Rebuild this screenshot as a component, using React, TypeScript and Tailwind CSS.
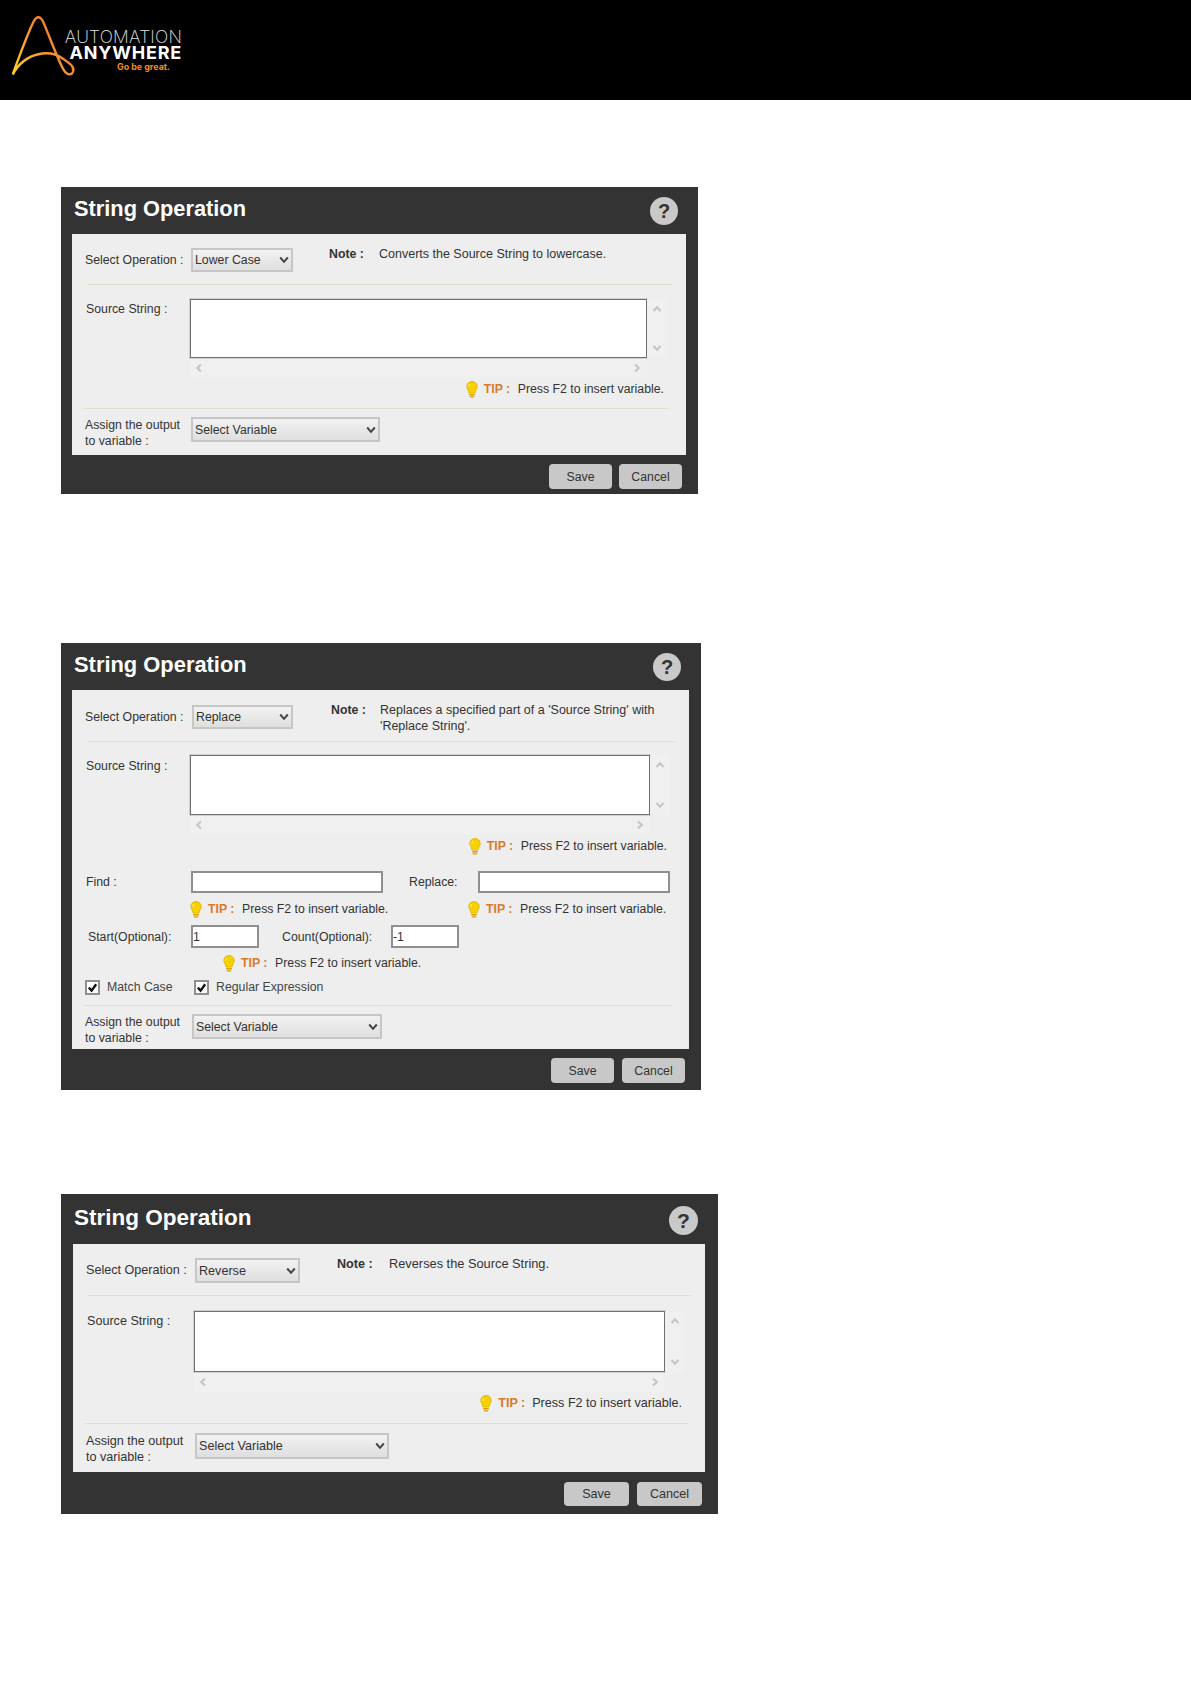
import { ReactNode } from "react";

const FONT = "font-['Liberation_Sans',Arial,sans-serif]";

function Chevron({ dir, className = "" }: { dir: "up" | "down" | "left" | "right"; className?: string }) {
  const d = {
    up: "M1.5 7 5 3.2 8.5 7",
    down: "M1.5 3 5 6.8 8.5 3",
    left: "M7 1.5 3.2 5 7 8.5",
    right: "M3 1.5 6.8 5 3 8.5",
  }[dir];
  return (
    <svg viewBox="0 0 10 10" className={`w-[10px] h-[10px] shrink-0 ${className}`} fill="none" stroke="#c4c4c4" strokeWidth="2">
      <path d={d} />
    </svg>
  );
}

function Bulb() {
  return (
    <svg viewBox="0 0 12 17" className="w-[12px] h-[17px] shrink-0">
      <path d="M6 .6C2.8.6.8 2.9.8 5.6c0 2.4 1.9 3.4 2.2 6.4h6c.3-3 2.2-4 2.2-6.4C11.2 2.9 9.2.6 6 .6Z" fill="#f7d000" stroke="#e0b400" strokeWidth=".9" />
      <path d="M4 3.2C3 4 2.7 5 2.9 6" fill="none" stroke="#fff3a0" strokeWidth="1" />
      <path d="M3.2 13h5.6v1.6H3.2zM3.8 15.2h4.4v1.4H3.8z" fill="#d6a000" />
    </svg>
  );
}

function Tip({ className = "" }: { className?: string }) {
  return (
    <div className={`flex items-center h-[20px] ${className}`}>
      <Bulb />
      <span className="ml-[6px] w-[34px] font-bold text-[#d97a2b]">TIP :</span>
      <span className="text-[#333]">Press F2 to insert variable.</span>
    </div>
  );
}

function Dropdown({ value, className }: { value: string; className: string }) {
  return (
    <div className={`relative shrink-0 ${className}`}>
      <select
        defaultValue={value}
        className="appearance-none w-full h-full pl-[2px] text-[#333] border-2 border-[#c6c6c6] bg-gradient-to-b from-[#f2f2f2] to-[#dfdfdf] rounded-none outline-none"
      >
        <option>{value}</option>
      </select>
      <svg viewBox="0 0 10 8" className="absolute right-[4px] top-1/2 -translate-y-1/2 w-[10px] h-[8px] pointer-events-none" fill="none" stroke="#444" strokeWidth="2">
        <path d="M1.2 1.5 5 5.8 8.8 1.5" />
      </svg>
    </div>
  );
}

function TextBox({ value, className }: { value?: string; className: string }) {
  return (
    <input
      readOnly
      value={value ?? ""}
      className={`shrink-0 bg-white border-2 border-[#8f8f8f] px-0 text-[#333] outline-none ${className}`}
    />
  );
}

function Check({ label, className = "" }: { label: string; className?: string }) {
  return (
    <div className={`flex items-center ${className}`}>
      <span className="flex items-center justify-center w-[15px] h-[15px] bg-white border-2 border-[#8f8f8f] shrink-0">
        <svg viewBox="0 0 12 12" className="w-[11px] h-[11px] shrink-0" fill="none" stroke="#111" strokeWidth="2.6">
          <path d="M2 6.2 5 9.4 10 2.4" />
        </svg>
      </span>
      <span className="ml-[7px] text-[#444]">{label}</span>
    </div>
  );
}

function Source({
  rowClass,
  labelClass,
  boxClass,
  hbarClass,
}: {
  rowClass: string;
  labelClass: string;
  boxClass: string;
  hbarClass: string;
}) {
  return (
    <div className={`flex items-start ${rowClass}`}>
      <div className={`shrink-0 text-[#333] ${labelClass}`}>Source String :</div>
      <div>
        <div className="flex">
          <textarea
            readOnly
            className={`block resize-none bg-white border border-[#707070] shadow-[0_0_0_1px_rgba(120,120,120,0.25)] outline-none ${boxClass}`}
          />
          <div className="w-[20px] flex flex-col items-center justify-between py-[5px] bg-[#f0f0f0]">
            <Chevron dir="up" />
            <Chevron dir="down" />
          </div>
        </div>
        <div className={`flex items-center justify-between h-[20px] pl-[4px] pr-[5px] bg-[#f0f0f0] ${hbarClass}`}>
          <Chevron dir="left" />
          <Chevron dir="right" />
        </div>
      </div>
    </div>
  );
}

function Dialog({
  className,
  headClass,
  titleClass,
  helpClass,
  panelClass,
  footClass,
  saveClass,
  cancelClass,
  children,
}: {
  className: string;
  headClass: string;
  titleClass: string;
  helpClass: string;
  panelClass: string;
  footClass: string;
  saveClass: string;
  cancelClass: string;
  children: ReactNode;
}) {
  return (
    <section className={`bg-[#333333] ml-[61px] ${className}`}>
      <header className={`flex items-center justify-between pl-[13px] pr-[20px] ${headClass}`}>
        <h2 className={`font-bold text-white leading-none -mt-[4px] ${titleClass}`}>String Operation</h2>
        <span className={`flex items-center justify-center rounded-full bg-[#c9c9c9] text-[#333] font-bold mt-[1px] ${helpClass}`}>?</span>
      </header>
      <div className={`bg-[#eeeeee] ${panelClass}`}>{children}</div>
      <footer className={`flex justify-end pr-[16px] ${footClass}`}>
        <button className={`bg-[#c8c8c8] rounded-[4px] text-[#333] ${saveClass}`}>Save</button>
        <button className={`bg-[#c8c8c8] rounded-[4px] text-[#333] ${cancelClass}`}>Cancel</button>
      </footer>
    </section>
  );
}

function Logo() {
  return (
    <div className="flex items-start h-[100px] bg-black">
      <svg viewBox="0 0 70 70" className="ml-[7px] mt-[14px] w-[70px] h-[64px] shrink-0" fill="none" strokeWidth="2.6" strokeLinecap="round">
        <defs>
          <linearGradient id="aa" x1="0" y1="1" x2="1" y2="0.2">
            <stop offset="0" stopColor="#ffd21f" />
            <stop offset="0.5" stopColor="#fa9a2c" />
            <stop offset="1" stopColor="#f2662b" />
          </linearGradient>
        </defs>
        <path
          d="M3 66 C 11 44 20 20 26 8 C 29 2 33 2 36 8 C 43 24 50 44 57 58 C 61 67 67 68 69 63 C 71 57 64 53 58 49 C 50 43 40 42 31 44 C 18 47 9 55 3 66 Z"
          stroke="url(#aa)"
        />
      </svg>
      <div className="ml-[-13px] mt-[29px] w-[118px] flex flex-col items-end font-['Inter',sans-serif]">
        <div className="text-[17.5px] leading-[15px] font-extralight text-[#e2e2e2] tracking-[0.2px] whitespace-nowrap">AUTOMATION</div>
        <div className="text-[18px] leading-[17px] font-bold text-white tracking-[0.8px] whitespace-nowrap">ANYWHERE</div>
        <div className="text-[8.9px] leading-[11px] mr-[12px] font-bold text-[#f08a24] whitespace-nowrap">Go be great.</div>
      </div>
    </div>
  );
}

export default function App() {
  return (
    <div className={`min-h-[1684px] bg-white leading-[16px] ${FONT}`}>
      <Logo />

      <Dialog
        className="mt-[87px] w-[637px] text-[12.3px]"
        headClass="h-[47px]"
        titleClass="text-[21.8px]"
        helpClass="w-[28px] h-[28px] text-[20px]"
        panelClass="ml-[11px] mr-[12px] h-[221px]"
        footClass="pt-[9px] h-[39px] gap-[7px]"
        saveClass="w-[63px] h-[25px]"
        cancelClass="w-[63px] h-[25px]"
      >
        <div className="flex h-[50px] pl-[13px] pt-[14px]">
          <div className="w-[106px] h-[23px] flex items-center text-[#333]">Select Operation :</div>
          <Dropdown value="Lower Case" className="w-[102px] h-[24px]" />
          <div className="ml-[36px] -mt-[2px] w-[50px] font-bold text-[#333]">Note :</div>
          <div className="-mt-[2px] text-[12.5px] text-[#333]">Converts the Source String to lowercase.</div>
        </div>
        <hr className="ml-[15px] w-[585px] border-[#e0e0cc]" />
        <Source rowClass="pl-[14px] pt-[14px]" labelClass="w-[104px] pt-[2px]" boxClass="w-[457px] h-[59px]" hbarClass="w-[457px]" />
        <div className="flex justify-end pr-[22px] pt-[1px] h-[20px]">
          <Tip />
        </div>
        <hr className="mt-[10px] ml-[11px] w-[586px] border-[#e0e0cc]" />
        <div className="flex pl-[13px] pt-[8px]">
          <div className="w-[106px] text-[#333]">
            Assign the output
            <br />
            to variable :
          </div>
          <Dropdown value="Select Variable" className="w-[189px] h-[25px]" />
        </div>
      </Dialog>

      <Dialog
        className="mt-[149px] w-[640px] text-[12.3px]"
        headClass="h-[47px]"
        titleClass="text-[21.9px]"
        helpClass="w-[28px] h-[28px] text-[20px]"
        panelClass="ml-[11px] mr-[12px] h-[359px]"
        footClass="pt-[9px] h-[41px] gap-[8px]"
        saveClass="w-[63px] h-[25px]"
        cancelClass="w-[63px] h-[25px]"
      >
        <div className="flex h-[51px] pl-[13px] pt-[15px]">
          <div className="w-[107px] h-[23px] flex items-center text-[#333]">Select Operation :</div>
          <Dropdown value="Replace" className="w-[101px] h-[24px]" />
          <div className="ml-[38px] -mt-[3px] w-[49px] font-bold text-[#333]">Note :</div>
          <div className="-mt-[3px] w-[290px] text-[12.5px] text-[#333]">Replaces a specified part of a 'Source String' with 'Replace String'.</div>
        </div>
        <hr className="ml-[15px] w-[588px] border-[#e0e0cc]" />
        <Source rowClass="pl-[14px] pt-[13px]" labelClass="w-[104px] pt-[3px]" boxClass="w-[460px] h-[60px]" hbarClass="w-[460px]" />
        <div className="flex justify-end pr-[22px] mt-[1px]">
          <Tip />
        </div>
        <div className="flex items-center pl-[14px] mt-[15px]">
          <div className="w-[105px] text-[#333]">Find :</div>
          <TextBox className="w-[192px] h-[22px]" />
          <div className="ml-[26px] w-[69px] text-[#333]">Replace:</div>
          <TextBox className="w-[192px] h-[22px]" />
        </div>
        <div className="flex pl-[118px] mt-[6px]">
          <Tip className="w-[278px]" />
          <Tip />
        </div>
        <div className="flex items-center pl-[16px] mt-[6px]">
          <div className="w-[103px] text-[#333]">Start(Optional):</div>
          <TextBox value="1" className="w-[68px] h-[23px]" />
          <div className="ml-[23px] w-[109px] text-[#333]">Count(Optional):</div>
          <TextBox value="-1" className="w-[68px] h-[23px]" />
        </div>
        <div className="flex pl-[151px] mt-[5px]">
          <Tip />
        </div>
        <div className="flex pl-[13px] mt-[6px] h-[16px]">
          <Check label="Match Case" className="w-[109px]" />
          <Check label="Regular Expression" />
        </div>
        <hr className="mt-[10px] ml-[11px] w-[590px] border-[#e0e0cc]" />
        <div className="flex pl-[13px] pt-[8px]">
          <div className="w-[107px] text-[#333]">
            Assign the output
            <br />
            to variable :
          </div>
          <Dropdown value="Select Variable" className="w-[190px] h-[25px]" />
        </div>
      </Dialog>

      <Dialog
        className="mt-[104px] w-[657px] text-[12.6px]"
        headClass="h-[50px] pt-[2px]"
        titleClass="text-[22.5px]"
        helpClass="w-[29px] h-[29px] text-[21px]"
        panelClass="ml-[12px] mr-[13px] h-[228px]"
        footClass="pt-[10px] h-[42px] gap-[8px]"
        saveClass="w-[65px] h-[24px]"
        cancelClass="w-[65px] h-[24px]"
      >
        <div className="flex h-[51px] pl-[13px] pt-[14px]">
          <div className="w-[109px] h-[24px] flex items-center text-[#333]">Select Operation :</div>
          <Dropdown value="Reverse" className="w-[105px] h-[25px]" />
          <div className="ml-[37px] -mt-[2px] w-[52px] font-bold text-[#333]">Note :</div>
          <div className="-mt-[2px] text-[12.8px] text-[#333]">Reverses the Source String.</div>
        </div>
        <hr className="ml-[15px] w-[603px] border-[#e0e0cc]" />
        <Source rowClass="pl-[14px] pt-[15px]" labelClass="w-[107px] pt-[2px]" boxClass="w-[471px] h-[61px]" hbarClass="w-[471px]" />
        <div className="flex justify-end pr-[23px] mt-[1px]">
          <Tip />
        </div>
        <hr className="mt-[10px] ml-[12px] w-[603px] border-[#e0e0cc]" />
        <div className="flex pl-[13px] pt-[9px]">
          <div className="w-[109px] text-[#333]">
            Assign the output
            <br />
            to variable :
          </div>
          <Dropdown value="Select Variable" className="w-[194px] h-[26px]" />
        </div>
      </Dialog>
    </div>
  );
}
